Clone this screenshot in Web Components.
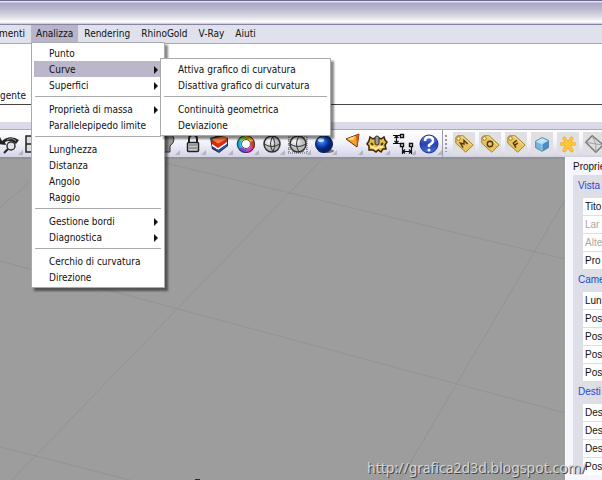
<!DOCTYPE html>
<html lang="it">
<head>
<meta charset="utf-8">
<title>Rhino</title>
<style>
html, body { height: 100%; margin: 0; }
body { overflow: hidden; font: 10px/16px "DejaVu Sans Condensed", "DejaVu Sans", sans-serif; color: #111; }
</style>
</head>
<body>
<cad-window></cad-window>
<script>
const define = (name, css, html, setup) => {
  const template = document.createElement('template');
  template.innerHTML = `<style>*{box-sizing:border-box}:host{display:block;box-sizing:border-box}${css}</style>${html}`;
  customElements.define(name, class extends HTMLElement {
    constructor() {
      super();
      this.attachShadow({ mode: 'open' }).append(template.content.cloneNode(true));
    }
    connectedCallback() { if (setup) setup(this, this.shadowRoot); }
  });
};

const icons = {
  rotate: '<path d="M4 9Q12 2 21 8L18 12Q13 7 7 10L8 13L1 12L2 5Z" fill="#222"/><path d="M9 8Q14 5 18 9" stroke="#999" stroke-width="1" fill="none"/><circle cx="13" cy="14" r="4" fill="#e4e4ec" stroke="#333" stroke-width="1.500"/><path d="M10 17L6 21" stroke="#222" stroke-width="2"/>',
  panes: '<path d="M2 4H21V20H2ZM2 12H21M11 4V20" fill="#ddd" stroke="#222" stroke-width="1.500"/>',
  lamp: '<path d="M7 3Q18 0 19 7Q19 11 15 14V20H9V14Q6 10 7 3Z" fill="#999" stroke="#333"/>',
  lock: '<path d="M8 12V7Q8 3 12 3Q16 3 16 7V12" fill="none" stroke="#222" stroke-width="2"/><rect x="6.500" y="10.500" width="11" height="9" rx="1" fill="#c8c8cc" stroke="#222" stroke-width="1.500"/><path d="M8 13H16M8 16H16" stroke="#666"/>',
  layers: '<path d="M3 6L12 3L21 6V14L12 21L5 17Z" fill="#233" /><path d="M4 7L18 4L20 7L11 12Z" fill="#ff7838"/><path d="M4 8L11 12L20 7V10L11 16L5 12Z" fill="#e42912"/><path d="M5 12L11 16L20 10V12L11 18L5 14Z" fill="#fff"/><path d="M5 15L12 18L20 12V14L12 20Z" fill="#2450bd"/>',
  wheel: '<g fill="none" stroke-width="4"><path d="M12 5A7 7 0 0 1 18 9" stroke="#f2a61a"/><path d="M18 9A7 7 0 0 1 18 16" stroke="#ef3328"/><path d="M18 16A7 7 0 0 1 12 19" stroke="#d839c9"/><path d="M12 19A7 7 0 0 1 6 16" stroke="#684be8"/><path d="M6 16A7 7 0 0 1 6 8" stroke="#19aeda"/><path d="M6 8A7 7 0 0 1 12 5" stroke="#78d528"/></g><circle cx="12" cy="12" r="8.500" fill="none" stroke="#333"/><circle cx="12" cy="12" r="4.500" fill="#fff" stroke="#555"/>',
  sphere: '<circle cx="12" cy="12" r="8" fill="url(#silver)" stroke="#333" stroke-width="1.500"/><path d="M4 12Q12 17 20 12M13 4Q8 12 13 20M12 4Q17 11 13 20" fill="none" stroke="#333"/>',
  gridsphere: '<path d="M3 3V21M7 3V21M12 3V21M17 3V21M21 3V21M2 4H22M2 8H22M2 12H22M2 17H22M2 21H22" stroke="#555" stroke-dasharray="1 1"/><circle cx="12" cy="12" r="8" fill="url(#silver)" stroke="#333" stroke-width="1.500"/><path d="M4 12Q12 17 20 12M13 4Q8 12 13 20" fill="none" stroke="#333"/>',
  ball: '<ellipse cx="14" cy="19" rx="8" ry="2" fill="#777"/><circle cx="12" cy="12" r="8.500" fill="url(#blue)" stroke="#0a205f"/><ellipse cx="9" cy="8" rx="3" ry="2" fill="#cde7ff"/>',
  cone: '<path d="M8 7L21 2L19 15Z" fill="#f9a22c" stroke="#643010"/><path d="M18 3L21 2L19 15Z" fill="#e05618"/><path d="M9 7L17 4L15 8Z" fill="#ffe089"/>',
  gear: '<path d="M5 5L8 7L10 6H14L16 7L19 5L20 8L22 10L20 13L21 17H18L16 20L13 18L11 20L8 18H4V14L2 12L4 9Z" fill="#e8bd40" stroke="#352509" stroke-width="1.500"/><path d="M5 14L8 15L11 17L14 15L18 15" stroke="#ffe895" stroke-width="2" fill="none"/><rect x="10" y="4" width="4" height="9" rx="2" fill="#999" stroke="#333"/><path d="M6 11L8 13M18 11L16 13" stroke="#4a3510" stroke-width="2"/>',
  dimensions: '<g fill="none" stroke="#111"><path d="M2 3.500H9M2 11.500H9M5.500 4V11M3.500 6L5.500 4L7.500 6M3.500 9L5.500 11L7.500 9M11.500 15V22M20.500 15V22M12 19.500H20M14 17.500L12 19.500L14 21.500M18 17.500L20 19.500L18 21.500" stroke-width="1.200"/><path d="M9.500 2.500H12.500V5.500H9.500ZM9.500 11.500H12.500V14.500H9.500ZM18.500 11.500H21.500V14.500H18.500Z" fill="#fff" stroke-width="1.400"/></g>',
  help: '<circle cx="12" cy="12" r="9" fill="url(#help)" stroke="#1d3187"/><path d="M8 9Q8 5 12 5Q16 5 16 9Q16 11 12 13V15" fill="none" stroke="#fff" stroke-width="2.500"/><circle cx="12" cy="18" r="1.500" fill="#fff"/>',
  cube: '<path d="M5 9L12 5L19 8V16L12 20L5 16Z" fill="#79b3da"/><path d="M5 9L12 5L19 8L12 12Z" fill="#c3e4f6"/><path d="M12 12L19 8V16L12 20Z" fill="#4b8cc0"/><path d="M5 9L12 12V20M12 12L19 8" stroke="#b4dcf2" fill="none"/><path d="M5 9L12 5L19 8V16L12 20L5 16Z" fill="none" stroke="#4a86b4"/>',
  star: '<g fill="none" stroke-linecap="round"><path d="M5 12H19M8 6L16 19M16 6L8 19" stroke="#e99f1c" stroke-width="4"/><path d="M5 12H19M8 6L16 19M16 6L8 19" stroke="#ffc637" stroke-width="3"/></g>',
  envelope: '<path d="M3 10L10 3L22 13L14 21Z" fill="#ddd" stroke="#777" stroke-width="1.500"/><path d="M3 10L14 12L14 21M10 3L14 12L22 13" stroke="#999" fill="none"/>'
};
const tagMark = { tagM: 'M11 16L8 11L12 12L12 8L16 12', tagO: 'M9 12Q9 9 12 9Q15 9 15 12Q15 15 12 15Q9 15 9 12', tagF: 'M12 16L9 11L13 8M11 13L14 11' };
for (const key in tagMark)
  icons[key] = `<path d="M3 5L5 3L11 3L22 13L14 21L3 11Z" fill="#e9c35c" stroke="#a77b20"/><path d="M5 6L10 4L20 13" fill="none" stroke="#f9e9a0"/><circle cx="6" cy="6" r="2" fill="#f5ead0" stroke="#9a752b"/><path d="${tagMark[key]}" fill="none" stroke="#4c3814" stroke-width="1.500"/>`;

define('tool-button', `
  :host{display:grid;place-items:center;position:relative}
  button{display:grid;place-items:center;width:24px;height:24px;padding:0;border:0;background:none}
  svg{width:24px;height:24px;display:block}
  :host([plate]) button{width:22px;height:23px;background:#e0e0e2}
  :host([plate]) svg{width:22px;height:22px}
  :host(:not([plate]))::after{content:"";position:absolute;right:0;bottom:2px;border:solid transparent;border-width:0 0 5px 5px;border-bottom-color:#b4b4bc}
`, '<button type="button"></button>', (host, root) => {
  const button = root.querySelector('button');
  button.setAttribute('aria-label', host.getAttribute('label'));
  button.innerHTML = `<svg viewBox="0 0 24 24" aria-hidden="true"><defs>
    <radialGradient id="silver" cx=".35" cy=".3"><stop stop-color="#fff"/><stop offset="1" stop-color="#bbb"/></radialGradient>
    <radialGradient id="blue" cx=".35" cy=".3"><stop stop-color="#5caaff"/><stop offset=".6" stop-color="#164bc8"/><stop offset="1" stop-color="#082270"/></radialGradient>
    <linearGradient id="help" x2="0" y2="1"><stop stop-color="#6b8be8"/><stop offset=".5" stop-color="#2540b6"/><stop offset="1" stop-color="#4671df"/></linearGradient>
    </defs>${icons[host.getAttribute('icon')] || ''}</svg>`;
});

define('tool-bar', `
  :host{display:flex;height:28px;border-top:1px solid #a9a9bb;overflow:hidden;background:linear-gradient(#fff,#f1f1fa 50%,#d3d3e8)}
  .main{flex:0 0 446px;margin-left:-3px;display:grid;grid-template-columns:repeat(17,1fr);border-right:1px solid #9c9cac}
  .extra{flex:1 0 159px;display:grid;grid-template-columns:8px repeat(6,26px)}
  .grip{margin:5px 2px;width:2px;background:repeating-linear-gradient(#999 0 2px,transparent 2px 4px)}
`, `<div class="main">
  ${[['rotate','Ruota vista'],['panes','Viste'],['','Sposta'],['','Zoom'],['','Piani'],['','Oggetti'],['lamp','Luci'],['lock','Blocca'],['layers','Livelli'],['wheel','Colori'],['sphere','Ombreggia'],['gridsphere','Griglia'],['ball','Renderizza'],['cone','Proprietà'],['gear','Opzioni'],['dimensions','Quote'],['help','Aiuto']].map(([i, l]) => `<tool-button icon="${i}" label="${l}"></tool-button>`).join('')}
  </div><div class="extra"><span class="grip"></span>
  ${[['tagM','Materiale'],['tagO','Opzioni V-Ray'],['tagF','Frame buffer'],['cube','Cubo'],['star','Sole'],['envelope','Piano']].map(([i, l]) => `<tool-button plate icon="${i}" label="${l}"></tool-button>`).join('')}
  </div>`);

define('title-bar', `:host{height:25px;border-top:1px solid #6d6992;border-bottom:1px solid #8884a4;background:linear-gradient(#e4e4f0 0 1px,#a8a6c8 2px,#babace 8px,#e3e3ea 17px,#fff 21px,#c0bcd0 23px)}`, '');

define('menu-entry', `
  :host{position:relative}
  button{display:flex;justify-content:space-between;align-items:center;width:100%;height:16px;border:0;padding:2px 4px 0 15px;background:none;font:inherit;line-height:14px;color:inherit;white-space:nowrap;text-align:left}
  :host([active]) button{background:#bbb6c9}
  i{border:solid transparent;border-width:4px 0 4px 4px;border-left-color:#111;display:none}
  :host([more]) i{display:block}
  ::slotted(pop-menu){position:absolute;left:calc(100% - 2px);top:-3px;z-index:2}
`, '<button type="button"><span><slot></slot></span><i></i></button><slot name="submenu"></slot>');
define('menu-rule', ':host{height:8px;padding:3px 1px 0}div{border-top:1px solid #aaa}', '<div role="separator"></div>');
define('pop-menu', `:host{background:#fff;border:1px solid #aaa;padding:2px;box-shadow:3px 3px 2px #0007;color:#111}`, '<slot></slot>');

define('menu-button', `
  :host{position:relative}
  button{height:17px;border:0;padding:0 5px;background:none;font:inherit;color:inherit;display:block;white-space:nowrap}
  :host([active]) button{background:#b9b4c7}
  ::slotted(pop-menu){position:absolute;left:0;top:100%;width:134px;z-index:3}
`, '<button type="button"><slot></slot></button><slot name="menu"></slot>');

define('menu-bar', `
  :host{display:flex;gap:1px;height:19px;background:#dfe1ed;border-bottom:1px solid #aaa}
  menu-button{align-self:flex-start}
  .cut{flex:0 0 30px;min-width:0;display:flex;justify-content:flex-end}
  .sub{width:171px}
`, `<menu-button class="cut">menti</menu-button>
  <menu-button active>Analizza
    <pop-menu slot="menu">
      <menu-entry>Punto</menu-entry>
      <menu-entry more active>Curve
        <pop-menu slot="submenu" class="sub">
          <menu-entry>Attiva grafico di curvatura</menu-entry>
          <menu-entry>Disattiva grafico di curvatura</menu-entry>
          <menu-rule></menu-rule>
          <menu-entry>Continuità geometrica</menu-entry>
          <menu-entry>Deviazione</menu-entry>
        </pop-menu>
      </menu-entry>
      <menu-entry more>Superfici</menu-entry>
      <menu-rule></menu-rule>
      <menu-entry more>Proprietà di massa</menu-entry>
      <menu-entry>Parallelepipedo limite</menu-entry>
      <menu-rule></menu-rule>
      <menu-entry>Lunghezza</menu-entry>
      <menu-entry>Distanza</menu-entry>
      <menu-entry>Angolo</menu-entry>
      <menu-entry>Raggio</menu-entry>
      <menu-rule></menu-rule>
      <menu-entry more>Gestione bordi</menu-entry>
      <menu-entry more>Diagnostica</menu-entry>
      <menu-rule></menu-rule>
      <menu-entry>Cerchio di curvatura</menu-entry>
      <menu-entry>Direzione</menu-entry>
    </pop-menu>
  </menu-button>
  <menu-button>Rendering</menu-button>
  <menu-button>RhinoGold</menu-button>
  <menu-button>V-Ray</menu-button>
  <menu-button>Aiuti</menu-button>`);

define('command-area', `
  :host{background:#fff}
  .history{height:61px;display:flex;align-items:flex-end;border-bottom:1px solid #444}
  .prompt{height:17px}
  .edge{height:7px;background:#dadae8}
`, '<div class="history"><span>gente</span></div><div class="prompt"></div><div class="edge"></div>');

define('view-port', `
  :host{background:#9d9d9d;overflow:hidden;box-shadow:inset 0 2px 1px #8888}
  svg{display:block}
`, `<svg width="565" height="323" viewBox="0 157 565 323" aria-hidden="true"><g fill="none" stroke="#929292">
  <path d="M324 157L12 480M0 207L60 157M140 157L565 259M0 261L565 413M565 200L400 480M0 447L130 480"/></g><path d="M195 479H200V480H195Z" fill="#1818aa"/></svg>`);

define('property-row', ':host{height:17px;background:#fff;padding-left:2px;line-height:17px;white-space:nowrap}:host([off]){color:#aaa89e}', '<slot></slot>');
define('property-group', `
  h3{margin:0;height:23px;padding-left:5px;font:inherit;line-height:21px;color:#1c48d0}
  .rows{display:grid;gap:1px;padding-left:10px}
`, '<h3></h3><div class="rows"><slot></slot></div>', (host, root) => { root.querySelector('h3').textContent = host.getAttribute('heading'); });
define('property-panel', `
  :host{background:#f6f6ff;padding-left:7px;font:10px/18px "Liberation Sans",sans-serif;overflow:hidden;border-left:1px solid #fff}
  header{white-space:nowrap;height:18px;line-height:20px}
  .body{background:#dedee6}
`, `<header>Proprie</header><div class="body">
  <property-group heading="Vista"><property-row>Tito</property-row><property-row off>Lar</property-row><property-row off>Alte</property-row><property-row>Pro</property-row></property-group>
  <property-group heading="Came"><property-row>Lun</property-row><property-row>Pos</property-row><property-row>Pos</property-row><property-row>Pos</property-row><property-row>Pos</property-row></property-group>
  <property-group heading="Desti"><property-row>Des</property-row><property-row>Des</property-row><property-row>Des</property-row><property-row>Pos</property-row></property-group>
  </div>`);

define('cad-window', `
  :host{display:flex;flex-direction:column;height:100%;position:relative;overflow:hidden}
  title-bar,menu-bar,command-area,tool-bar{flex:none}
  .work{flex:1;min-height:0;display:grid;grid-template-columns:1fr 37px}
  .credit{position:absolute;right:16px;bottom:3px;font:14px/18px "Noto Sans",sans-serif;color:#d4d4d4;text-shadow:1px 1px 0 #444}
`, `<title-bar></title-bar><menu-bar></menu-bar><command-area></command-area><tool-bar></tool-bar>
  <div class="work"><view-port></view-port><property-panel></property-panel></div>
  <div class="credit">http://grafica2d3d.blogspot.com/</div>`);
</script>
</body>
</html>
